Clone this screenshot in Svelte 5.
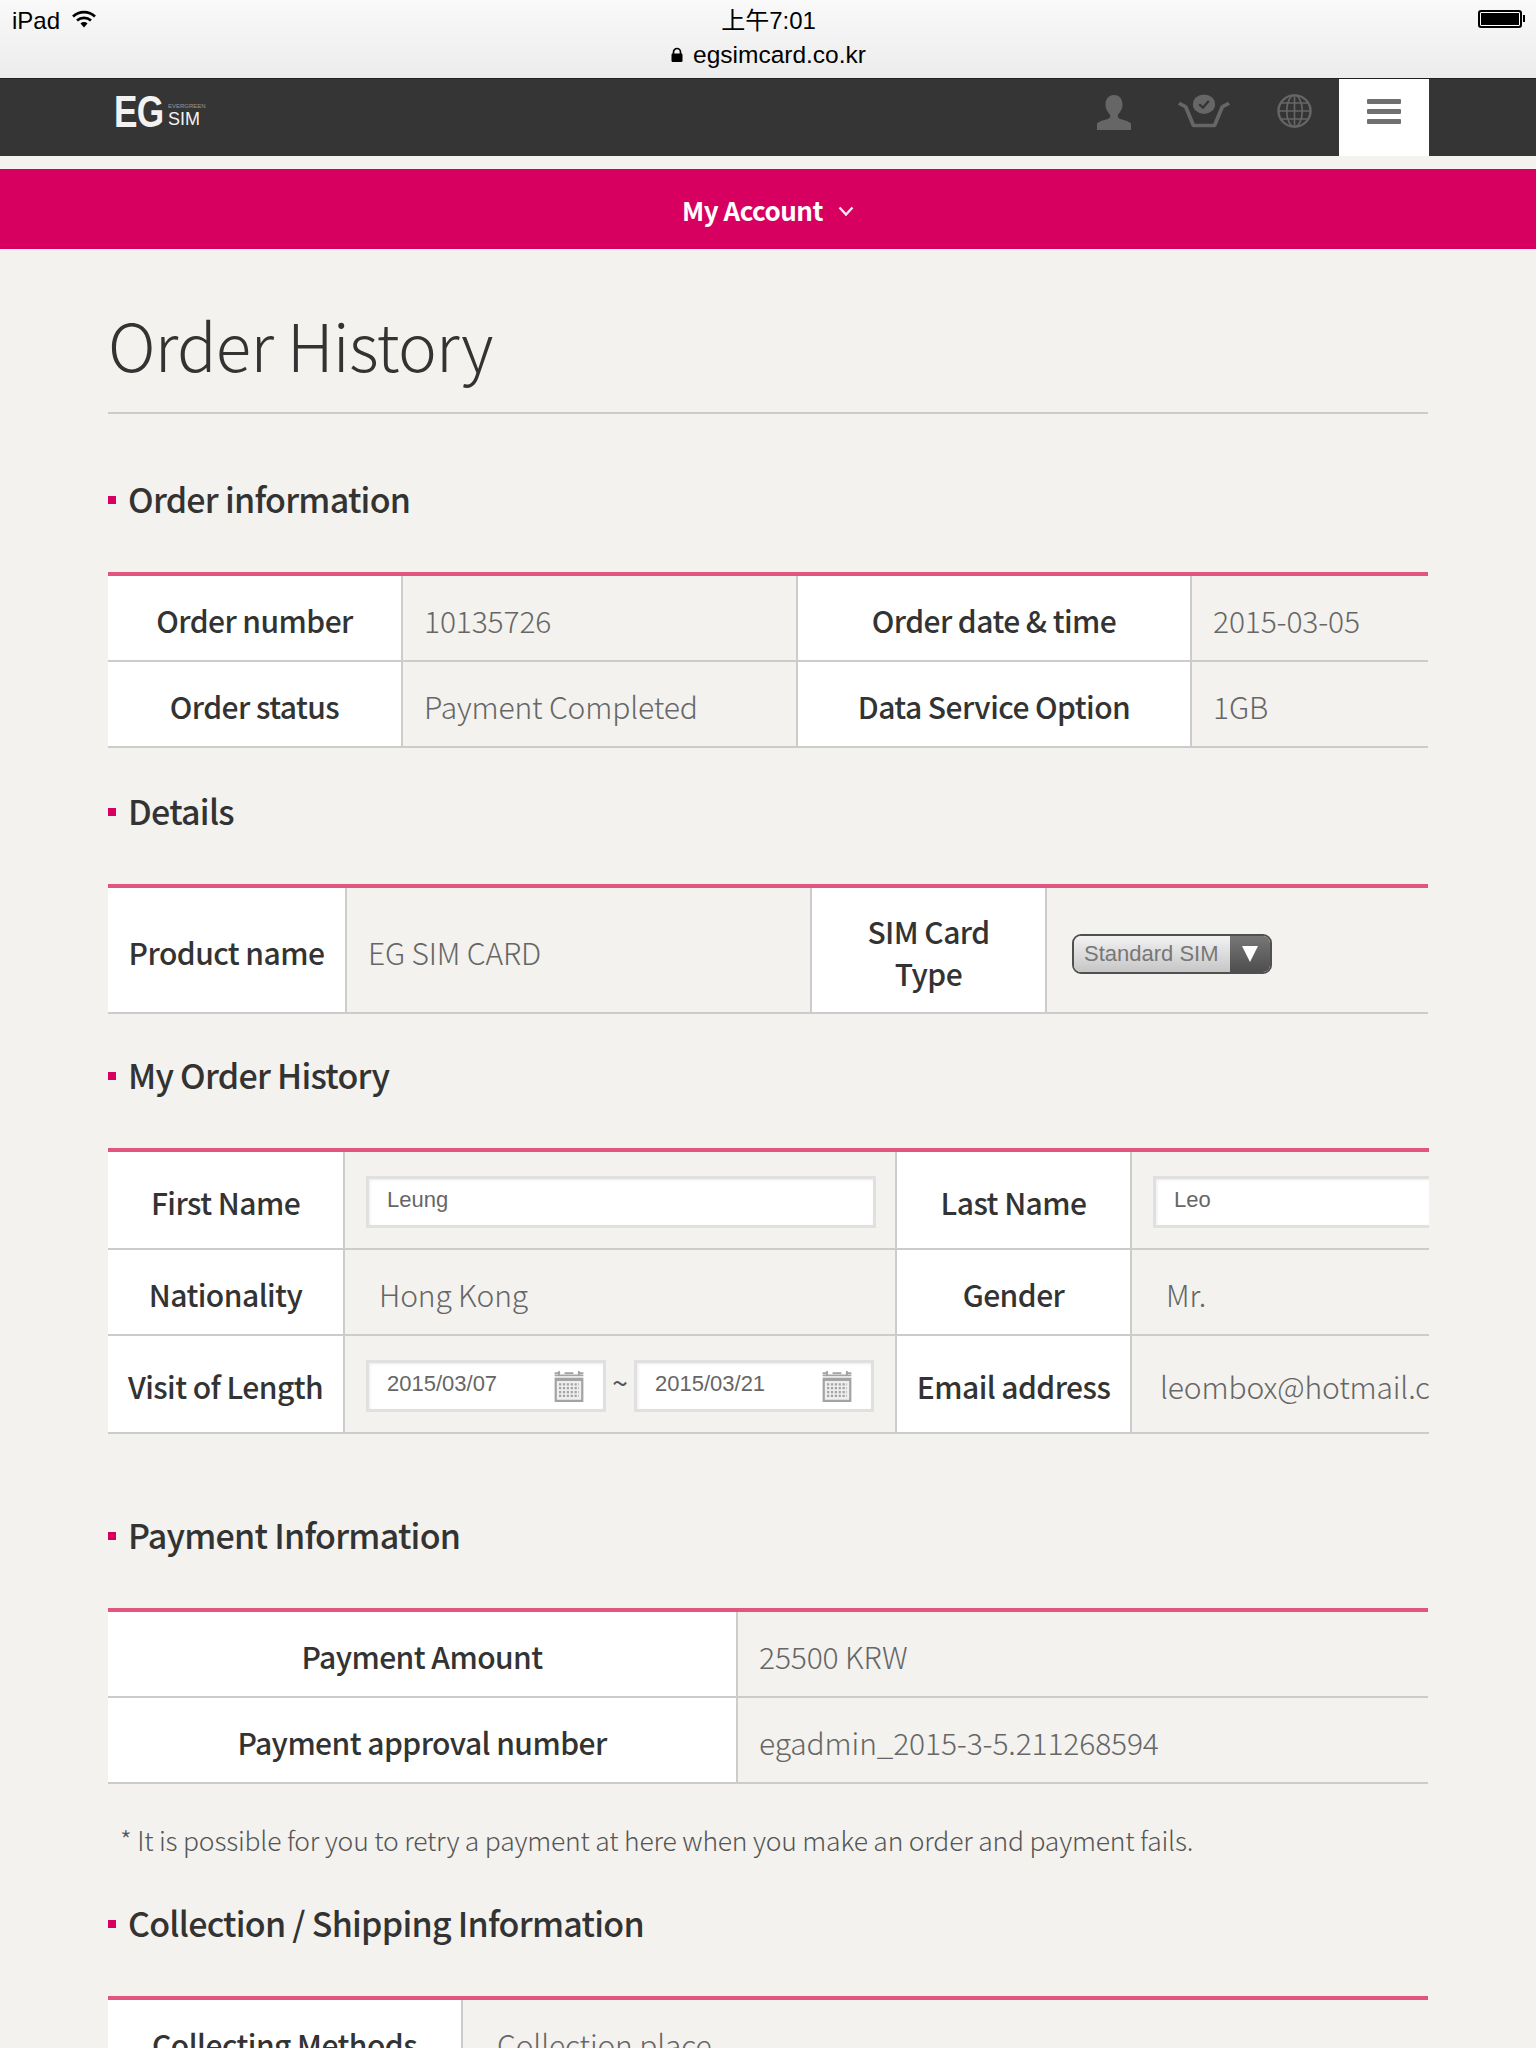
<script lang="ts">
  const orderRows = [
    ["Order number", "10135726", "Order date & time", "2015-03-05"],
    ["Order status", "Payment Completed", "Data Service Option", "1GB"]
  ];
  const paymentRows = [
    ["Payment Amount", "25500 KRW"],
    ["Payment approval number", "egadmin_2015-3-5.211268594"]
  ];
</script>

{#snippet calendar()}
  <svg class="cal" viewBox="2 1 26 28" width="30" height="31" aria-hidden="true">
    <path d="M2 7h26v22H2z" fill="#a3a3a3" />
    <path d="M2 3h5M11 3h8M23 3h5M2 5h26" stroke="#a3a3a3" stroke-width="1.6" fill="none" />
    <path d="M6 1v4M24 1v4" stroke="#a3a3a3" stroke-width="1.6" />
    <rect x="4" y="10" width="22" height="17" fill="#eee" />
    <path d="M6 13h18M6 16.5h18M6 20h18M6 23.5h18" stroke="#a3a3a3" stroke-width="2" stroke-dasharray="2 1.5" />
  </svg>
{/snippet}

<div class="status">
  <div class="status-row">
    <div class="carrier">
      iPad
      <svg viewBox="0 0 26 20" width="26" height="20" aria-hidden="true">
        <path d="M2 7.5a16 16 0 0 1 22 0M6 11.5a10.5 10.5 0 0 1 14 0" fill="none" stroke="#000" stroke-width="2.6" />
        <path d="M9.5 14.5a5 5 0 0 1 7 0L13 18.5z" fill="#000" />
      </svg>
    </div>
    <div class="time">上午7:01</div>
    <div class="battery"><span class="cell"></span><span class="tip"></span></div>
  </div>
  <div class="url">
    <svg viewBox="0 0 14 16" width="14" height="16" aria-hidden="true">
      <path d="M3.5 7V5a3.5 3.5 0 0 1 7 0v2" fill="none" stroke="#000" stroke-width="1.7" />
      <rect x="1.5" y="6.5" width="11" height="8.5" rx="1.2" fill="#000" />
    </svg>
    egsimcard.co.kr
  </div>
</div>

<header class="top">
  <div class="logo">
    <span class="eg">EG</span>
    <span class="logo-side"><small>EVERGREEN</small><b>SIM</b></span>
  </div>
  <nav class="tools">
    <svg class="person" viewBox="0 0 36 40" width="36" height="36" preserveAspectRatio="none" aria-hidden="true">
      <path d="M18 1c6 0 8.500 5 8.500 11 0 5-3 9-4.500 11-1 2 0 4 3 5 5 1.500 9 3 10 5v7H1v-7c1-2 5-3.500 10-5 3-1 4-3 3-5-1.500-2-4.500-6-4.500-11C9.500 6 12 1 18 1z" fill="#666" />
    </svg>
    <svg class="basket" viewBox="0 0 56 40" width="54" height="34" preserveAspectRatio="none" aria-hidden="true">
      <path d="M2 11l7 4 8 22h22l8-22 7-4" fill="none" stroke="#666" stroke-width="4" stroke-linejoin="round" />
      <circle cx="28" cy="12" r="11.500" fill="#666" />
      <path d="M23 12l4 4 6-8" fill="none" stroke="#353535" stroke-width="2.5" />
    </svg>
    <svg class="globe" viewBox="0 0 36 40" width="35" height="34" preserveAspectRatio="none" aria-hidden="true">
      <g fill="none" stroke="#666" stroke-width="1.7">
        <ellipse cx="18" cy="20" rx="16.500" ry="18.500" stroke-width="2.5" />
        <ellipse cx="18" cy="20" rx="8" ry="18.500" />
        <path d="M18 1.500v37M2 20h32M4 10.500h28M4 29.500h28" />
      </g>
    </svg>
    <button class="menu" aria-label="Menu"><span></span><span></span><span></span></button>
  </nav>
</header>

<div class="account">
  My Account
  <svg viewBox="0 0 16 10" width="16" height="10" aria-hidden="true">
    <path d="M1.500 1.500l6.500 7 6.500-7" fill="none" stroke="#fff" stroke-width="2.400" opacity=".9" />
  </svg>
</div>

<main>
  <h1>Order History</h1>

  <h2 class="first">Order information</h2>
  <table class="t-order">
    <colgroup><col style="width:295px" /><col style="width:395px" /><col style="width:394px" /><col /></colgroup>
    <tbody>
      {#each orderRows as r}
        <tr>
          <th>{r[0]}</th><td>{r[1]}</td><th>{r[2]}</th><td>{r[3]}</td>
        </tr>
      {/each}
    </tbody>
  </table>

  <h2 class="details">Details</h2>
  <table class="t-details">
    <colgroup><col style="width:239px" /><col style="width:465px" /><col style="width:235px" /><col /></colgroup>
    <tbody>
      <tr>
        <th>Product name</th>
        <td>EG SIM CARD</td>
        <th>SIM Card<br />Type</th>
        <td>
          <div class="select">
            <span class="sel-label">Standard SIM</span>
            <span class="sel-arrow"><i></i></span>
          </div>
        </td>
      </tr>
    </tbody>
  </table>

  <h2 class="history">My Order History</h2>
  <div class="clip">
    <table class="t-history">
      <colgroup><col style="width:237px" /><col style="width:552px" /><col style="width:235px" /><col /></colgroup>
      <tbody>
        <tr class="r1">
          <th>First Name</th>
          <td class="f"><input class="inp" value="Leung" readonly /></td>
          <th>Last Name</th>
          <td class="f"><input class="inp over" value="Leo" readonly /></td>
        </tr>
        <tr class="r2">
          <th>Nationality</th>
          <td class="ind">Hong Kong</td>
          <th>Gender</th>
          <td class="ind">Mr.</td>
        </tr>
        <tr class="r3">
          <th>Visit of Length</th>
          <td class="f">
            <div class="dates">
              <div class="date"><span>2015/03/07</span>{@render calendar()}</div>
              <span class="tilde">~</span>
              <div class="date"><span>2015/03/21</span>{@render calendar()}</div>
            </div>
          </td>
          <th>Email address</th>
          <td class="mail">leombox@hotmail.com</td>
        </tr>
      </tbody>
    </table>
  </div>

  <h2 class="payment">Payment Information</h2>
  <table class="t-pay">
    <colgroup><col style="width:630px" /><col /></colgroup>
    <tbody>
      {#each paymentRows as r}
        <tr><th>{r[0]}</th><td>{r[1]}</td></tr>
      {/each}
    </tbody>
  </table>

  <p class="note">* It is possible for you to retry a payment at here when you make an order and payment fails.</p>

  <h2 class="shipping">Collection / Shipping Information</h2>
  <table class="t-ship">
    <colgroup><col style="width:355px" /><col /></colgroup>
    <tbody>
      <tr><th>Collecting Methods</th><td>Collection place</td></tr>
    </tbody>
  </table>
</main>

<style>
  :global(body) {
    margin: 0;
    background: #f3f2ee;
    height: 2048px;
    overflow: hidden;
    font-family: "Noto Sans CJK KR", "Noto Sans", sans-serif;
  }

  .status {
    height: 78px;
    box-sizing: border-box;
    background: linear-gradient(#f9f9f9, #ececec);
    font-family: "Liberation Sans", "Noto Sans CJK SC", sans-serif;
    color: #000;
    padding-top: 6px;
    overflow: hidden;
  }

  .status-row {
    display: grid;
    grid-template-columns: 1fr auto 1fr;
    align-items: center;
    padding: 0 11px 0 12px;
    height: 28px;
    font-size: 24px;
  }

  .carrier {
    display: flex;
    align-items: center;
    gap: 11px;
    margin-top: -1px;
  }

  .carrier svg {
    margin-top: -4px;
  }

  .time {
    font-size: 24px;
    margin-top: -5px;
  }

  .battery {
    justify-self: end;
    display: flex;
    align-items: center;
    margin-top: -5px;
  }

  .cell {
    width: 44px;
    height: 18px;
    box-sizing: border-box;
    background: #000;
    border: 2px solid #000;
    box-shadow: inset 0 0 0 1px #fff;
    border-radius: 3px;
  }

  .tip {
    width: 2px;
    height: 7px;
    background: #000;
    margin-left: 1px;
  }

  .url {
    display: flex;
    justify-content: center;
    align-items: center;
    gap: 9px;
    font-size: 24.500px;
    height: 28px;
    margin-top: 7px;
  }

  .top {
    height: 78px;
    box-sizing: border-box;
    background: #353535;
    border-top: 1px solid #222;
    display: flex;
    justify-content: space-between;
    padding: 0 107px 0 114px;
  }

  .logo {
    display: flex;
    align-items: flex-start;
    color: #f2f2f2;
    font-family: "Liberation Sans", sans-serif;
    font-weight: 700;
    padding-top: 17px;
  }

  .eg {
    display: block;
    width: 54px;
    font-size: 44px;
    line-height: 32px;
    letter-spacing: -1px;
    transform: scaleX(0.8);
    transform-origin: left;
  }

  .logo-side {
    display: flex;
    flex-direction: column;
    width: 40px;
    padding-top: 7px;
  }

  .logo-side small {
    font-size: 6px;
    line-height: 7px;
    color: #999;
    font-weight: 400;
    white-space: nowrap;
  }

  .logo-side b {
    font-size: 18px;
    line-height: 18px;
    font-weight: 400;
  }

  .tools {
    display: flex;
    align-items: flex-start;
  }

  .tools svg {
    margin-top: 15px;
  }

  .tools .person {
    margin-right: 45px;
  }

  .tools .basket {
    margin-right: 46px;
  }

  .tools .globe {
    margin-right: 27px;
  }

  .menu {
    width: 90px;
    height: 77px;
    background: #fff;
    border: 0;
    padding: 0 0 13px;
    display: flex;
    flex-direction: column;
    gap: 5px;
    align-items: center;
    justify-content: center;
  }

  .menu span {
    display: block;
    width: 34px;
    height: 5px;
    border-radius: 1px;
    background: #707070;
  }

  .account {
    margin-top: 13px;
    height: 80px;
    background: #d70060;
    color: #fff;
    font-size: 26px;
    letter-spacing: -0.5px;
    font-weight: 700;
    display: flex;
    align-items: center;
    justify-content: center;
    gap: 15px;
  }

  .account svg {
    margin-top: 4px;
  }

  main {
    width: 1320px;
    margin: 0 auto;
  }

  h1 {
    margin: 0;
    padding-top: 50px;
    height: 113px;
    border-bottom: 2px solid #ccc;
    font-size: 65.500px;
    letter-spacing: -0.7px;
    line-height: 90px;
    font-weight: 300;
    color: #333;
  }

  h2 {
    position: relative;
    margin: 0;
    padding-left: 20px;
    font-size: 34px;
    letter-spacing: -0.75px;
    line-height: 50px;
    font-weight: 500;
    color: #333;
  }

  h2::before {
    content: "";
    position: absolute;
    left: 0;
    top: 22px;
    width: 8px;
    height: 8px;
    background: #d70060;
  }

  .first { margin-top: 60px; margin-bottom: 48px; }
  .details { margin-top: 38px; margin-bottom: 48px; }
  .history { margin-top: 36px; margin-bottom: 48px; }
  .payment { margin-top: 76px; margin-bottom: 48px; }
  .shipping { margin-top: 37px; margin-bottom: 48px; }

  table {
    width: 1320px;
    table-layout: fixed;
    border-collapse: separate;
    border-spacing: 0;
    border-top: 4px solid #e1557f;
    font-size: 30px;
  }

  th {
    background: #fff;
    color: #333;
    font-weight: 500;
    letter-spacing: -0.55px;
    text-align: center;
    padding: 3px 4px 0;
    border-bottom: 2px solid #ccc;
    border-right: 2px solid #ccc;
    line-height: 42px;
    box-sizing: border-box;
  }

  td {
    color: #666;
    font-weight: 300;
    letter-spacing: -0.15px;
    padding: 3px 0 0 21px;
    border-bottom: 2px solid #ccc;
    border-right: 2px solid #ccc;
    box-sizing: border-box;
    line-height: 42px;
  }

  td:last-child {
    border-right: 0;
  }

  .t-order tr { height: 86px; }
  .t-details tr { height: 126px; }
  .t-pay tr { height: 86px; }
  .t-ship tr { height: 86px; }

  .t-ship td {
    padding-left: 34px;
  }

  .select {
    display: inline-flex;
    height: 40px;
    width: 200px;
    box-sizing: border-box;
    border: 2px solid #505050;
    border-radius: 9px;
    overflow: hidden;
    vertical-align: middle;
    margin: 0 0 1px 4px;
    font-family: "Liberation Sans", sans-serif;
    font-weight: 400;
    letter-spacing: 0;
  }

  .sel-label {
    flex: 1;
    padding-left: 10px;
    background: linear-gradient(#f2f2f2, #c6c6c6);
    font-size: 22px;
    line-height: 35px;
    color: #777;
  }

  .sel-arrow {
    width: 40px;
    background: linear-gradient(#777, #4e4e4e);
    display: flex;
    align-items: center;
    justify-content: center;
  }

  .sel-arrow i {
    border-left: 8px solid transparent;
    border-right: 8px solid transparent;
    border-top: 16px solid #fff;
  }

  .clip {
    width: 1321px;
    overflow: hidden;
  }

  .t-history {
    width: 1321px;
  }

  .t-history .r1 { height: 98px; }
  .t-history .r2 { height: 86px; }
  .t-history .r3 { height: 98px; }

  .t-history td.f {
    padding-left: 21px;
    padding-top: 4px;
  }

  .t-history td.ind {
    padding-left: 34px;
  }

  .t-history td.mail {
    padding-left: 28px;
    white-space: nowrap;
    overflow: hidden;
  }

  .inp {
    display: block;
    box-sizing: border-box;
    width: 510px;
    height: 52px;
    border: 3px solid #e0e0e0;
    background: #fff;
    box-shadow: inset 1px 1px 3px #ececec;
    padding: 0 0 4px 18px;
    font-family: "Liberation Sans", sans-serif;
    font-size: 22px;
    color: #666;
    outline: 0;
    border-radius: 0;
  }

  .inp.over {
    width: 360px;
  }

  .dates {
    display: flex;
    align-items: flex-start;
  }

  .date {
    width: 240px;
    height: 52px;
    box-sizing: border-box;
    border: 3px solid #e0e0e0;
    background: #fff;
    box-shadow: inset 1px 1px 3px #ececec;
    padding: 0 19px 0 18px;
    display: flex;
    align-items: center;
    justify-content: space-between;
    font-family: "Liberation Sans", sans-serif;
    font-size: 22px;
    letter-spacing: 0;
    color: #666;
    line-height: 40px;
  }

  .date span {
    margin-bottom: 4px;
  }

  .tilde {
    width: 28px;
    text-align: center;
    font-size: 28px;
    line-height: 44px;
    color: #555;
    font-weight: 400;
  }

  .cal {
    flex: none;
  }

  .note {
    margin: 35px 0 0 12px;
    font-size: 26.500px;
    letter-spacing: -0.2px;
    line-height: 42px;
    font-weight: 300;
    color: #555;
  }
</style>
